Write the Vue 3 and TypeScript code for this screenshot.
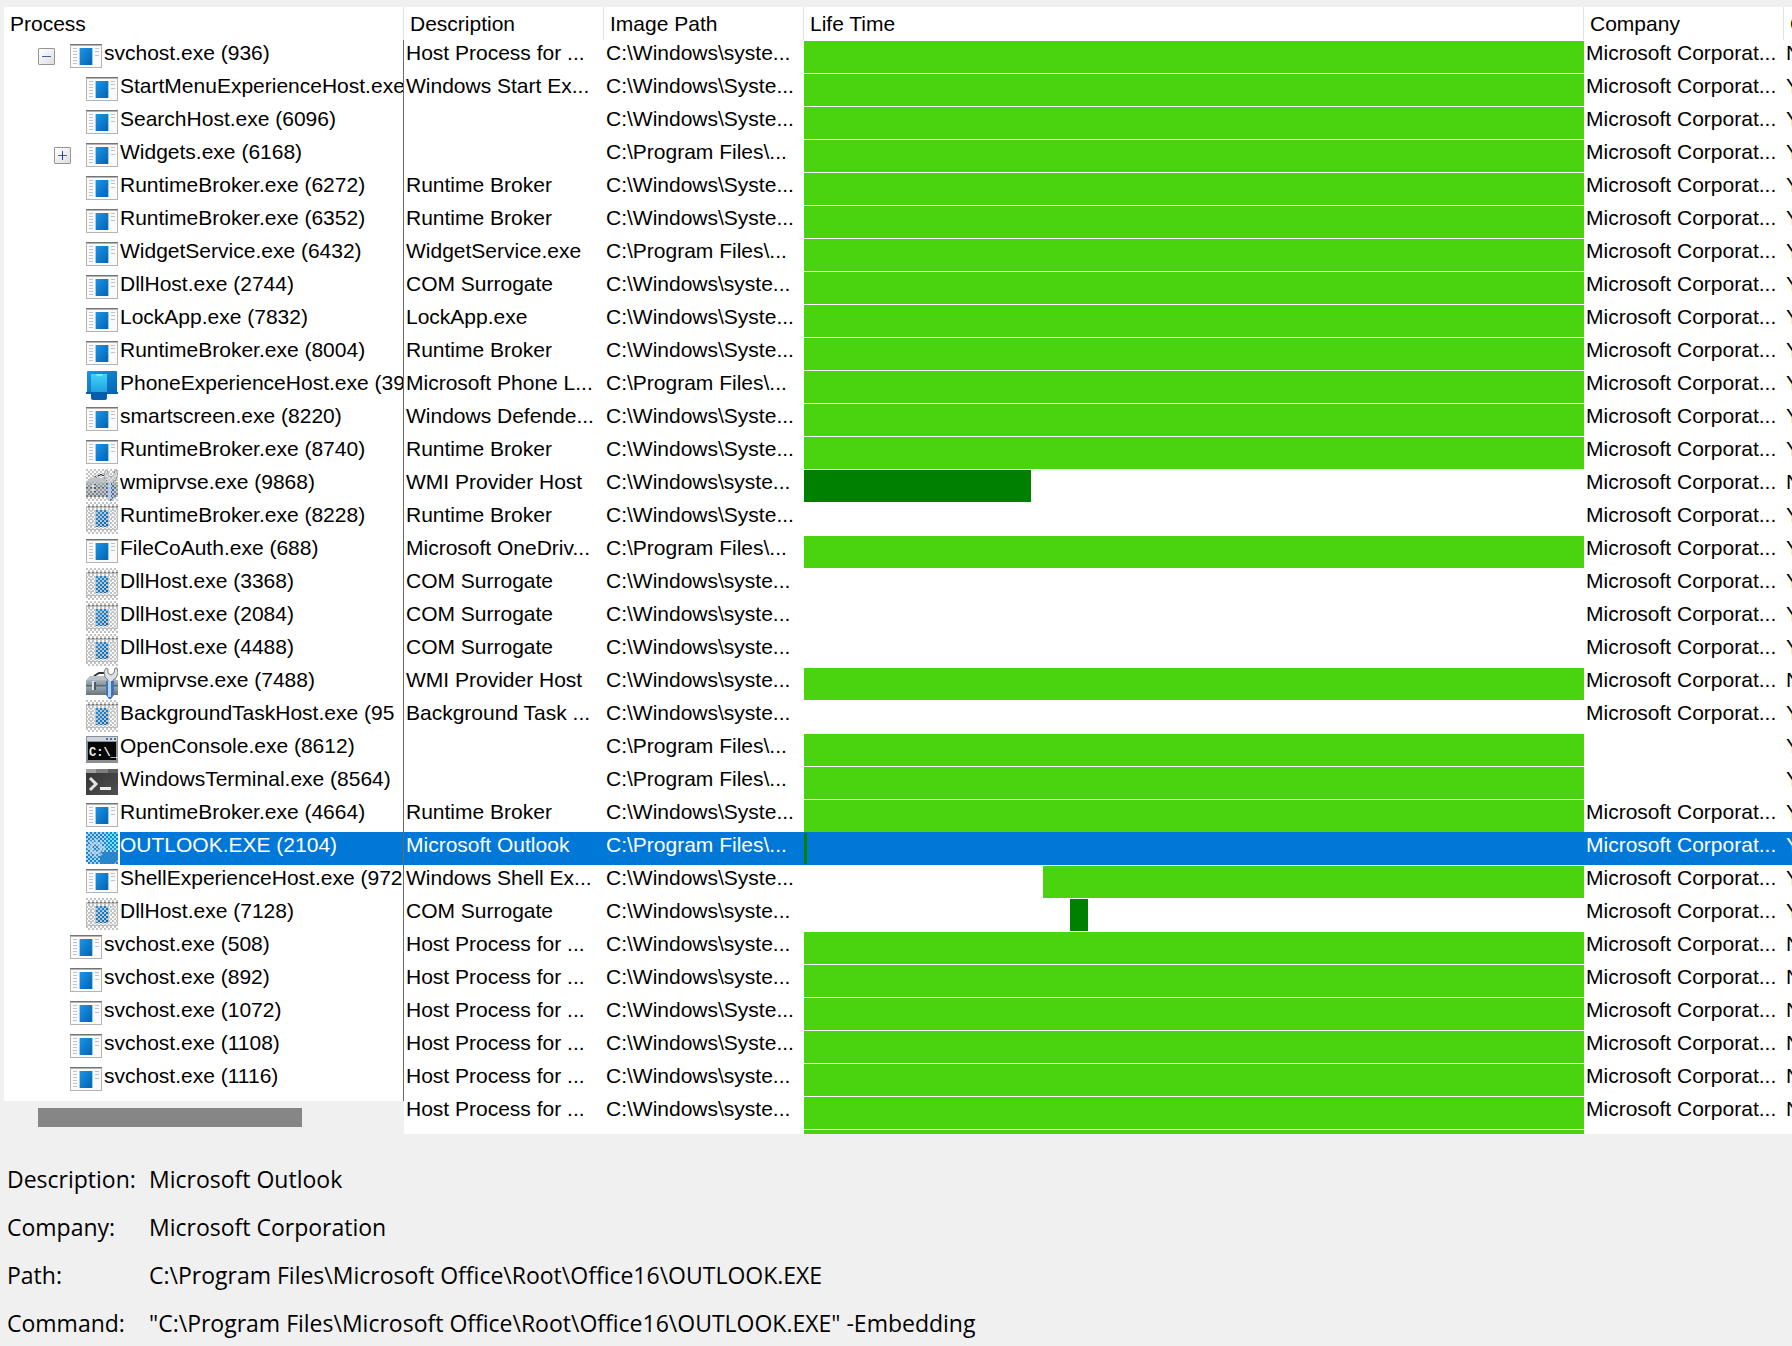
<script setup lang="ts">
import { computed, ref } from 'vue'

type IconKind = 'exe' | 'phone' | 'tools' | 'console' | 'terminal' | 'gear'

interface Bar {
  start: number
  size: number
  ended?: boolean
}

interface ProcessRow {
  name: string
  desc: string
  path: string
  company: string
  owner: string
  icon: IconKind
  level: number
  exited: boolean
  toggle?: 'open' | 'closed'
  bar?: Bar
}

const SYS = 'C:\\Windows\\syste...'
const SYS_UPPER = 'C:\\Windows\\Syste...'
const PROG = 'C:\\Program Files\\...'
const MS = 'Microsoft Corporat...'
const HOST = 'Host Process for ...'
const FULL: Bar = { start: 0, size: 100 }

function row(name: string, desc: string, path: string, extra: Partial<ProcessRow> = {}): ProcessRow {
  return { name, desc, path, company: MS, owner: 'Y', icon: 'exe', level: 2, exited: false, bar: FULL, ...extra }
}

const ended: Partial<ProcessRow> = { exited: true, bar: undefined }
const service: Partial<ProcessRow> = { level: 1, owner: 'N' }

const rows: ProcessRow[] = [
  row('svchost.exe (936)', HOST, SYS, { ...service, toggle: 'open' }),
  row('StartMenuExperienceHost.exe', 'Windows Start Ex...', SYS_UPPER),
  row('SearchHost.exe (6096)', '', SYS_UPPER),
  row('Widgets.exe (6168)', '', PROG, { toggle: 'closed' }),
  row('RuntimeBroker.exe (6272)', 'Runtime Broker', SYS_UPPER),
  row('RuntimeBroker.exe (6352)', 'Runtime Broker', SYS_UPPER),
  row('WidgetService.exe (6432)', 'WidgetService.exe', PROG),
  row('DllHost.exe (2744)', 'COM Surrogate', SYS),
  row('LockApp.exe (7832)', 'LockApp.exe', SYS_UPPER),
  row('RuntimeBroker.exe (8004)', 'Runtime Broker', SYS_UPPER),
  row('PhoneExperienceHost.exe (39', 'Microsoft Phone L...', PROG, { icon: 'phone' }),
  row('smartscreen.exe (8220)', 'Windows Defende...', SYS_UPPER),
  row('RuntimeBroker.exe (8740)', 'Runtime Broker', SYS_UPPER),
  row('wmiprvse.exe (9868)', 'WMI Provider Host', SYS, {
    icon: 'tools', exited: true, owner: 'N', bar: { start: 0, size: 29.1, ended: true },
  }),
  row('RuntimeBroker.exe (8228)', 'Runtime Broker', SYS_UPPER, ended),
  row('FileCoAuth.exe (688)', 'Microsoft OneDriv...', PROG),
  row('DllHost.exe (3368)', 'COM Surrogate', SYS, ended),
  row('DllHost.exe (2084)', 'COM Surrogate', SYS, ended),
  row('DllHost.exe (4488)', 'COM Surrogate', SYS, ended),
  row('wmiprvse.exe (7488)', 'WMI Provider Host', SYS, { icon: 'tools', owner: 'N' }),
  row('BackgroundTaskHost.exe (95', 'Background Task ...', SYS, ended),
  row('OpenConsole.exe (8612)', '', PROG, { icon: 'console', company: '' }),
  row('WindowsTerminal.exe (8564)', '', PROG, { icon: 'terminal', company: '' }),
  row('RuntimeBroker.exe (4664)', 'Runtime Broker', SYS_UPPER),
  row('OUTLOOK.EXE (2104)', 'Microsoft Outlook', PROG, {
    icon: 'gear', exited: true, bar: { start: 0, size: 0.4, ended: true },
  }),
  row('ShellExperienceHost.exe (972', 'Windows Shell Ex...', SYS_UPPER, { bar: { start: 30.6, size: 69.4 } }),
  row('DllHost.exe (7128)', 'COM Surrogate', SYS, { exited: true, bar: { start: 34.1, size: 2.3, ended: true } }),
  row('svchost.exe (508)', HOST, SYS, service),
  row('svchost.exe (892)', HOST, SYS, service),
  row('svchost.exe (1072)', HOST, SYS_UPPER, service),
  row('svchost.exe (1108)', HOST, SYS_UPPER, service),
  row('svchost.exe (1116)', HOST, SYS, service),
  row('', HOST, SYS, service),
  row('', '', '', { ...service, company: '', owner: '' }),
]

const treeRows = computed(() => rows.filter((r) => r.name))
const selected = ref(24)

const details = [
  { label: 'Description:', value: 'Microsoft Outlook' },
  { label: 'Company:', value: 'Microsoft Corporation' },
  { label: 'Path:', value: 'C:\\Program Files\\Microsoft Office\\Root\\Office16\\OUTLOOK.EXE' },
  { label: 'Command:', value: '"C:\\Program Files\\Microsoft Office\\Root\\Office16\\OUTLOOK.EXE" -Embedding' },
]
</script>

<template>
  <main class="window">
    <svg class="defs" aria-hidden="true">
      <defs>
        <linearGradient id="blue" x1="0" y1="0" x2="1" y2="1">
          <stop offset="0" stop-color="#1b95e6" />
          <stop offset="1" stop-color="#0462b4" />
        </linearGradient>
        <linearGradient id="cyan" x1="0" y1="0" x2="0" y2="1">
          <stop offset="0" stop-color="#43d4f6" />
          <stop offset="1" stop-color="#1fa0e0" />
        </linearGradient>
        <linearGradient id="steel" x1="0" y1="0" x2="0" y2="1">
          <stop offset="0" stop-color="#a9b5bb" />
          <stop offset="0.45" stop-color="#77868e" />
          <stop offset="0.5" stop-color="#94a2a9" />
          <stop offset="1" stop-color="#66757d" />
        </linearGradient>
        <linearGradient id="dark" x1="0" y1="0" x2="1" y2="1">
          <stop offset="0" stop-color="#333333" />
          <stop offset="1" stop-color="#505050" />
        </linearGradient>
        <pattern id="checker" width="4" height="4" patternUnits="userSpaceOnUse">
          <path d="M0 0h2v2H0zM2 2h2v2H2z" fill="#c3c3c3" />
        </pattern>
        <pattern id="checker-blue" width="4" height="4" patternUnits="userSpaceOnUse">
          <path d="M0 0h2v2H0zM2 2h2v2H2z" fill="#1c84d4" />
        </pattern>
      </defs>
    </svg>

    <section class="panes">
      <div class="tree-pane">
        <table class="grid">
          <thead>
            <tr><th scope="col">Process</th></tr>
          </thead>
          <tbody>
            <tr v-for="(r, i) in treeRows" :key="i" :class="{ selected: i === selected }" @click="selected = i">
              <td>
                <div class="node" :class="'level-' + r.level">
                  <span class="gutter">
                    <button v-if="r.toggle" type="button" class="toggle" :aria-label="r.toggle === 'open' ? 'Collapse' : 'Expand'">
                      <svg width="17" height="17" viewBox="0 0 17 17" shape-rendering="crispEdges">
                        <path d="M4 8h9v1H4z" fill="#3f5fae" />
                        <path v-if="r.toggle === 'closed'" d="M8 4h1v9H8z" fill="#26418f" />
                      </svg>
                    </button>
                  </span>
                  <svg class="icon" width="32" height="32" viewBox="0 0 32 32">
                    <g v-if="r.icon === 'exe'" shape-rendering="crispEdges">
                      <path d="M0 4h32v24H0z" fill="#b4b4b4" />
                      <path d="M1 6h30v21H1z" fill="#fafafa" />
                      <path d="M0 4h32v1H0z" fill="#747474" />
                      <path d="M3 8h4v1H3zM3 11h4v1H3zM3 14h4v1H3zM3 17h4v1H3zM3 20h4v1H3zM3 23h4v1H3zM25 8h4v1h-4zM25 11h4v1h-4zM25 15h4v1h-4z" fill="#c2c2c2" />
                      <path d="M9 8h14v17H9z" fill="#9fcdf0" />
                      <path d="M10 8h12v17H10z" fill="url(#blue)" />
                    </g>
                    <g v-else-if="r.icon === 'phone'">
                      <path d="M2 1h28q1 0 1 1v20l1 2H0l1-2V2q0-1 1-1z" fill="url(#blue)" />
                      <path d="M0 22h32v2H0z" fill="#0b62ac" />
                      <path d="M5 4h16v18H5z" fill="url(#cyan)" />
                      <path d="M10 4h7q0 2-2 2h-3q-2 0-2-2z" fill="#7aecff" />
                      <path d="M5 22h16v6q0 2-2 2H7q-2 0-2-2z" fill="#075cac" />
                    </g>
                    <g v-else-if="r.icon === 'tools'">
                      <path d="M8 9l5-3h6l3 3" fill="none" stroke="#303437" stroke-width="2" />
                      <path d="M1 12l3-3h20l6 3v6H0z" fill="#b8c2c7" />
                      <path d="M0 13h32v15H0z" fill="url(#steel)" />
                      <path d="M0 18h32v1H0z" fill="#58666d" />
                      <path d="M6 14h3v9H6z" fill="#dce2e5" />
                      <path d="M8 15h2v8H8z" fill="#4e5b62" />
                      <path d="M20 1l-2 4 1 5 3 3v3h5v-3l3-2 2-5-1-5h-2l-1 5-3 2-3-2 0-4z" fill="#dfe2e3" stroke="#7a8083" stroke-width="1" />
                      <path d="M20 14h8v14l-3 4h-2l-3-4z" fill="#3f72b6" />
                      <path d="M22 14h3v16h-3z" fill="#b6d2f2" />
                    </g>
                    <g v-else-if="r.icon === 'console'">
                      <path d="M0 3h32v27H0z" fill="#8b8f94" />
                      <path d="M1 4h30v4H1z" fill="#cdd5e0" />
                      <path d="M20 5h2v2h-2zM24 5h2v2h-2zM28 5h2v2h-2z" fill="#526fa5" />
                      <path d="M2 9h28v18H2z" fill="#050505" />
                      <text x="3" y="23" class="prompt">C:\_</text>
                    </g>
                    <g v-else-if="r.icon === 'terminal'">
                      <path d="M0 3h32v26H0z" fill="url(#dark)" />
                      <path d="M0 3h10v4H0z" fill="#a0a0a0" />
                      <path d="M10 3h12v4H10z" fill="#7e7e7e" />
                      <path d="M22 3h10v4H22z" fill="#5e5e5e" />
                      <path d="M4 12l6 6-6 6" fill="none" stroke="#e2e2e2" stroke-width="3" />
                      <path d="M14 21h11v3H14z" fill="#ececec" />
                    </g>
                    <g v-else>
                      <path d="M3 0h29v32H3L0 29V3z" fill="#a9d3ec" />
                      <path d="M20 0h12v17H20z" fill="#6fe6fb" />
                      <path d="M14 20h18v8l-4 4H14z" fill="#3a86c2" />
                    </g>
                    <rect v-if="r.exited" width="32" height="32" shape-rendering="crispEdges" :fill="i === selected ? 'url(#checker-blue)' : 'url(#checker)'" />
                    <g v-if="r.icon === 'gear'" fill="none" stroke="#c6d8e6" stroke-opacity="0.75">
                      <circle cx="10" cy="16" r="5" stroke-width="3" />
                      <circle cx="10" cy="16" r="8" stroke-width="2" stroke-dasharray="3 3" />
                    </g>
                  </svg>
                  <span class="name">{{ r.name }}</span>
                </div>
              </td>
            </tr>
          </tbody>
        </table>
        <div class="scroll-track"><div class="scroll-thumb"></div></div>
      </div>

      <div class="data-pane">
        <table class="grid wide">
          <colgroup>
            <col class="col-text" />
            <col class="col-text" />
            <col />
            <col class="col-text" />
            <col class="col-last" />
          </colgroup>
          <thead>
            <tr>
              <th scope="col">Description</th>
              <th scope="col">Image Path</th>
              <th scope="col">Life Time</th>
              <th scope="col">Company</th>
              <th scope="col">O</th>
            </tr>
          </thead>
          <tbody>
            <tr v-for="(r, i) in rows" :key="i" :class="{ selected: i === selected }" @click="selected = i">
              <td class="text">{{ r.desc }}</td>
              <td class="text">{{ r.path }}</td>
              <td>
                <div
                  v-if="r.bar"
                  class="bar"
                  :class="{ ended: r.bar.ended }"
                  :style="{ marginLeft: r.bar.start + '%', width: r.bar.size + '%' }"
                ></div>
              </td>
              <td class="text">{{ r.company }}</td>
              <td class="text">{{ r.owner }}</td>
            </tr>
          </tbody>
        </table>
      </div>
    </section>

    <dl class="details">
      <div v-for="d in details" :key="d.label" class="detail">
        <dt>{{ d.label }}</dt>
        <dd>{{ d.value }}</dd>
      </div>
    </dl>
  </main>
</template>

<style>
body {
  margin: 0;
  background: #f0f0f0;
}
</style>

<style scoped>
.window {
  min-height: 100vh;
  box-sizing: border-box;
  padding: 7px 0 0 4px;
  background: #f0f0f0;
  color: #000;
  font-family: "Liberation Sans", Arial, sans-serif;
  font-size: 21px;
  overflow: hidden;
}
.defs {
  position: absolute;
  width: 0;
  height: 0;
}
.panes {
  display: flex;
  max-height: 1127px;
  overflow: hidden;
}
.tree-pane {
  flex: 0 0 400px;
  overflow: hidden;
}
.data-pane {
  flex: 1;
  min-width: 0;
  overflow: hidden;
}
.grid {
  width: 100%;
  table-layout: fixed;
  border-collapse: separate;
  border-spacing: 0;
  background: #fff;
}
.wide {
  width: calc(100% + 92px);
}
.col-text {
  width: 200px;
}
.col-last {
  width: 100px;
}
th {
  height: 33px;
  box-sizing: border-box;
  padding: 0 6px;
  border-right: 1px solid #e2e2e2;
  font-weight: 400;
  line-height: 33px;
  text-align: left;
  white-space: nowrap;
}
td {
  height: 33px;
  padding: 0;
  vertical-align: top;
  line-height: 25px;
  white-space: nowrap;
  overflow: hidden;
}
.tree-pane td {
  border-right: 1px solid #6a6a6a;
}
.tree-pane tr:last-child td {
  height: 38px;
}
.text {
  padding-left: 2px;
}
.node {
  display: flex;
  height: 33px;
}
.gutter {
  flex: none;
  box-sizing: border-box;
  width: 66px;
  padding: 8px 0 0 34px;
}
.level-2 .gutter {
  width: 82px;
  padding-left: 50px;
}
.toggle {
  display: block;
  box-sizing: border-box;
  width: 17px;
  height: 17px;
  padding: 0;
  border: 1px solid #959595;
  border-radius: 1px;
  background: linear-gradient(135deg, #fff, #dedede);
}
.toggle svg {
  display: block;
  margin: -1px;
}
.icon {
  flex: none;
}
.prompt {
  fill: #f2f2f2;
  font: bold 12px "Liberation Mono", monospace;
}
.name {
  flex: 1;
  min-width: 0;
  margin-left: 2px;
  overflow: hidden;
}
.selected .name,
.wide .selected td {
  background: #0078d7;
  color: #fff;
}
.bar {
  height: 32px;
  margin-top: 1px;
  background: #4ad40f;
}
.bar.ended {
  background: #008000;
}
.selected .bar {
  height: 31px;
}
.scroll-track {
  padding: 7px 0 7px 34px;
  background: #f0f0f0;
}
.scroll-thumb {
  width: 264px;
  height: 19px;
  background: #868686;
}
.details {
  display: flex;
  flex-direction: column;
  gap: 20px;
  margin: 0;
  padding: 31px 0 8px 3px;
  font-family: "Segoe UI", "Open Sans", sans-serif;
  font-size: 23px;
  line-height: 28px;
}
.detail {
  display: flex;
}
dt {
  flex: 0 0 142px;
}
dd {
  margin: 0;
}
</style>
